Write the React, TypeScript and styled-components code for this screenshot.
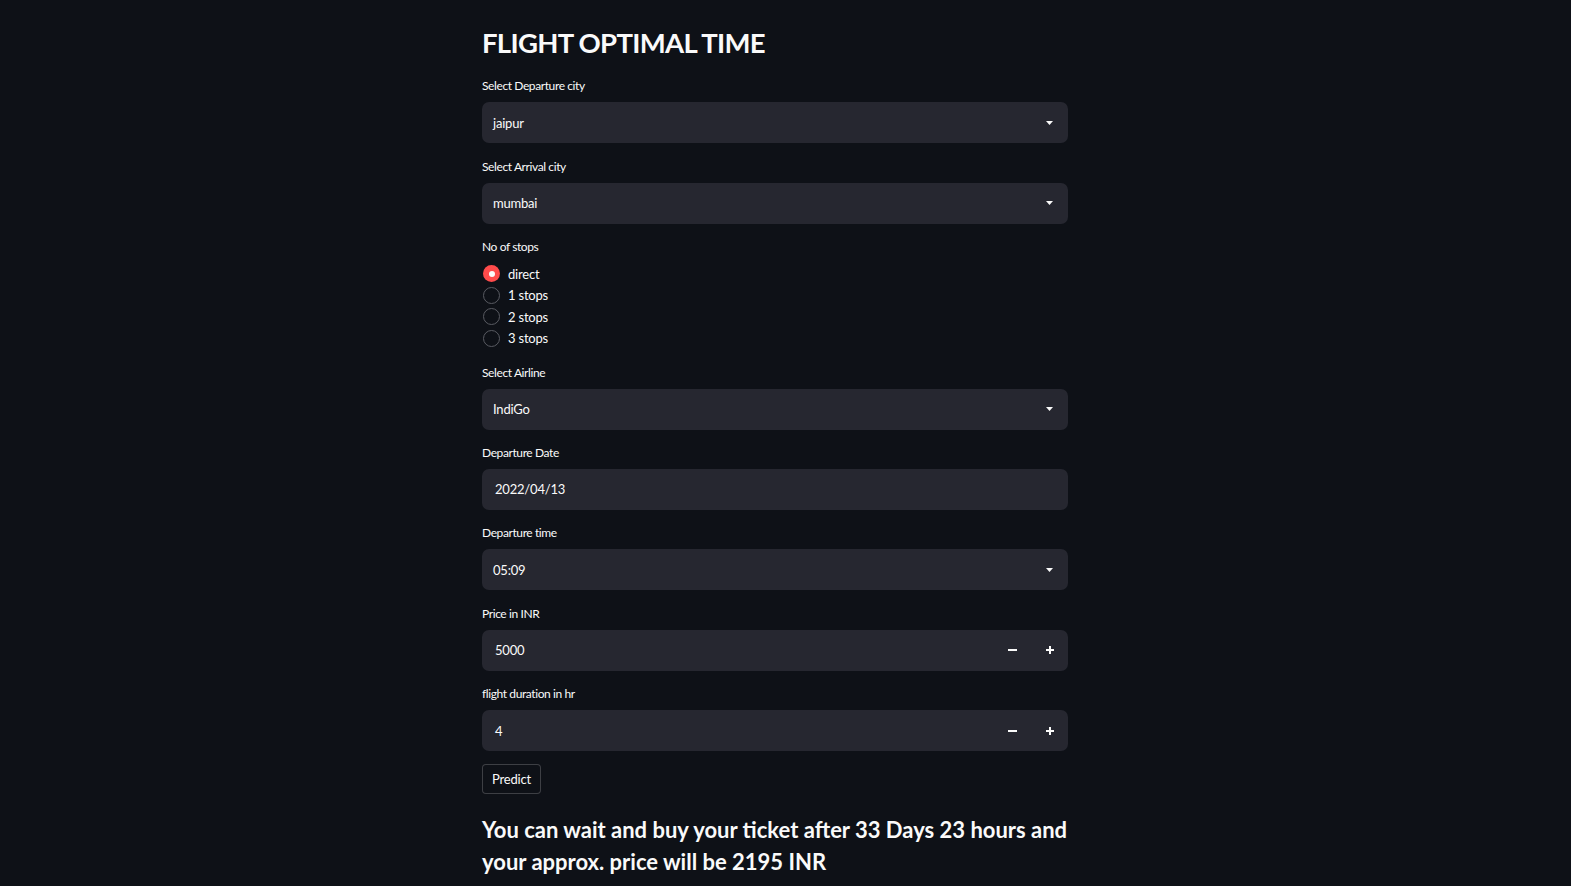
import React, { useState } from 'react';
import styled, { createGlobalStyle } from 'styled-components';

const GlobalStyle = createGlobalStyle`
    html, body {
        margin: 0;
        padding: 0;
        background-color: #0e1117;
    }
    * {
        box-sizing: border-box;
    }
`;

const PageContainer = styled.div`
    background-color: #0e1117;
    min-height: 886px;
    width: 100%;
    padding: 24px 0 20px 482px;
    font-family: "Source Sans Pro", Lato, "Liberation Sans", sans-serif;
    color: #fafafa;
`;

const Column = styled.div`
    width: 586px;
    display: flex;
    flex-direction: column;
    gap: 13.4px;
`;

const Title = styled.h1`
    margin: 0 0 1px 0;
    font-size: 27.5px;
    line-height: 38px;
    font-weight: 700;
    letter-spacing: -0.7px;
`;

const Field = styled.div`
    display: flex;
    flex-direction: column;
`;

const Label = styled.label`
    font-size: 12px;
    line-height: 20px;
    height: 20px;
    margin-bottom: 6px;
    letter-spacing: -0.4px;
`;

const Box = styled.div<{ $pad?: number }>`
    height: 41px;
    background: #262730;
    border-radius: 7px;
    display: flex;
    align-items: center;
    font-size: 13px;
    letter-spacing: -0.2px;
    padding-left: ${props => props.$pad ?? 11}px;
`;

const BoxText = styled.span`
    flex: 1;
`;

const Caret = styled.span`
    width: 37px;
    display: flex;
    justify-content: center;
    align-items: center;
`;

const StepButton = styled.button`
    width: 37px;
    height: 100%;
    border: none;
    background: transparent;
    color: #fafafa;
    display: flex;
    justify-content: center;
    align-items: center;
    padding: 0;
    cursor: pointer;
`;

const RadioRow = styled.div`
    height: 21.5px;
    display: flex;
    align-items: center;
    gap: 8px;
    font-size: 13px;
    letter-spacing: -0.2px;
    cursor: pointer;
`;

const RadioDot = styled.span<{ $on: boolean }>`
    width: 17px;
    height: 17px;
    border-radius: 50%;
    margin-left: 1px;
    display: flex;
    justify-content: center;
    align-items: center;
    background: ${props => (props.$on ? '#ff4b4b' : 'transparent')};
    border: ${props => (props.$on ? 'none' : '1.5px solid #595b62')};

    &::after {
        content: '';
        display: ${props => (props.$on ? 'block' : 'none')};
        width: 6px;
        height: 6px;
        border-radius: 50%;
        background: #fafafa;
    }
`;

const PredictButton = styled.button`
    align-self: flex-start;
    height: 30px;
    padding: 0 9px;
    margin-top: -1px;
    background: #0e1117;
    color: #fafafa;
    border: 1px solid rgba(250, 250, 250, 0.2);
    border-radius: 4px;
    font-family: inherit;
    font-size: 13px;
    letter-spacing: -0.2px;
`;

const Result = styled.h3`
    margin: 7px 0 0 0;
    font-size: 22px;
    line-height: 32px;
    font-weight: 700;
    letter-spacing: 0;
    width: 600px;
`;

const CaretIcon = () => (
    <svg width="7" height="4" viewBox="0 0 7 4">
        <path d="M0 0h7L3.5 4z" fill="#fafafa" />
    </svg>
);

const MinusIcon = () => (
    <svg width="9" height="2" viewBox="0 0 9 2">
        <rect x="0" y="0" width="9" height="2" fill="#fafafa" />
    </svg>
);

const PlusIcon = () => (
    <svg width="8" height="8" viewBox="0 0 8 8">
        <rect x="0" y="3" width="8" height="2" fill="#fafafa" />
        <rect x="3" y="0" width="2" height="8" fill="#fafafa" />
    </svg>
);

const SelectBox: React.FC<{ value: string }> = ({ value }) => (
    <Box>
        <BoxText>{value}</BoxText>
        <Caret><CaretIcon /></Caret>
    </Box>
);

const NumberBox: React.FC<{ value: string }> = ({ value }) => (
    <Box $pad={13}>
        <BoxText>{value}</BoxText>
        <StepButton><MinusIcon /></StepButton>
        <StepButton><PlusIcon /></StepButton>
    </Box>
);

const stops = ['direct', '1 stops', '2 stops', '3 stops'];

export default function App() {
    const [stop, setStop] = useState('direct');

    return (
        <PageContainer>
            <GlobalStyle />
            <Column>
                <Title>FLIGHT OPTIMAL TIME</Title>

                <Field>
                    <Label>Select Departure city</Label>
                    <SelectBox value="jaipur" />
                </Field>

                <Field>
                    <Label>Select Arrival city</Label>
                    <SelectBox value="mumbai" />
                </Field>

                <Field>
                    <Label>No of stops</Label>
                    {stops.map(s => (
                        <RadioRow key={s} onClick={() => setStop(s)}>
                            <RadioDot $on={stop === s} />
                            {s}
                        </RadioRow>
                    ))}
                </Field>

                <Field>
                    <Label>Select Airline</Label>
                    <SelectBox value="IndiGo" />
                </Field>

                <Field>
                    <Label>Departure Date</Label>
                    <Box $pad={13}>
                        <BoxText>2022/04/13</BoxText>
                    </Box>
                </Field>

                <Field>
                    <Label>Departure time</Label>
                    <SelectBox value="05:09" />
                </Field>

                <Field>
                    <Label>Price in INR</Label>
                    <NumberBox value="5000" />
                </Field>

                <Field>
                    <Label>flight duration in hr</Label>
                    <NumberBox value="4" />
                </Field>

                <PredictButton>Predict</PredictButton>

                <Result>
                    You can wait and buy your ticket after 33 Days 23 hours and your approx. price will be 2195 INR
                </Result>
            </Column>
        </PageContainer>
    );
}
